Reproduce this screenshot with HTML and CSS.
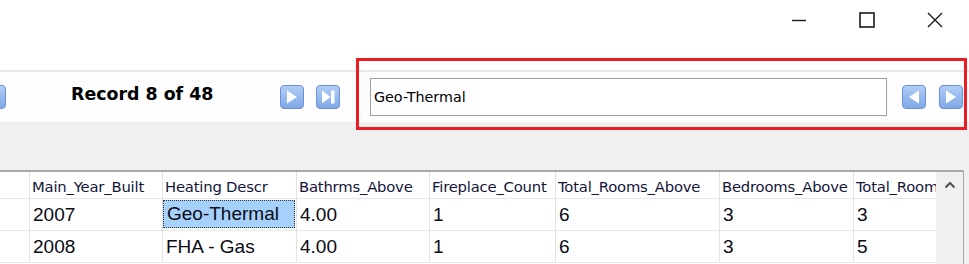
FILE: index.html
```html
<!DOCTYPE html>
<html lang="en">

<head>
    <meta charset="UTF-8">
    <meta name="viewport" content="width=device-width, initial-scale=1.0">
    <title>Record view</title>
    <link rel="stylesheet" href="styles.css">
</head>

<body>
    <div class="titlebar">
        <div class="win">
            <svg width="16" height="16" viewBox="0 0 16 16"><path d="M1 8.5h14" stroke="#1a1a1a" stroke-width="1.4"/></svg>
        </div>
        <div class="win">
            <svg width="16" height="16" viewBox="0 0 16 16"><rect x="1" y="1" width="14" height="14" fill="none" stroke="#1a1a1a" stroke-width="1.6"/></svg>
        </div>
        <div class="win">
            <svg width="16" height="16" viewBox="0 0 16 16"><path d="M1 1L15 15M15 1L1 15" stroke="#1a1a1a" stroke-width="1.4"/></svg>
        </div>
    </div>

    <div class="toolbar">
        <div class="btn cut">
            <svg width="22" height="22" viewBox="0 0 22 22"><path d="M16 4.5v13l-10-6.5z" fill="#fff"/></svg>
        </div>
        <div class="record">Record 8 of 48</div>
        <div class="btn">
            <svg width="22" height="22" viewBox="0 0 22 22"><path d="M6 4.5v13l10-6.5z" fill="#fff"/></svg>
        </div>
        <div class="btn next">
            <svg width="22" height="22" viewBox="0 0 22 22"><path d="M5 4.5v13l8.5-6.5z M14 4.5h3.5v13h-3.5z" fill="#fff"/></svg>
        </div>
        <div class="search">Geo-Thermal</div>
        <div class="btn">
            <svg width="22" height="22" viewBox="0 0 22 22"><path d="M16 4.5v13l-10-6.5z" fill="#fff"/></svg>
        </div>
        <div class="btn pair">
            <svg width="22" height="22" viewBox="0 0 22 22"><path d="M6 4.5v13l10-6.5z" fill="#fff"/></svg>
        </div>
    </div>

    <!-- annotation drawn over the screenshot -->
    <div class="mark"></div>

    <div class="panel">
        <div class="band"></div>
        <div class="grid">
            <div class="cells">
                <div class="row head">
                    <div class="c"></div>
                    <div class="c">Main_Year_Built</div>
                    <div class="c">Heating Descr</div>
                    <div class="c">Bathrms_Above</div>
                    <div class="c">Fireplace_Count</div>
                    <div class="c">Total_Rooms_Above</div>
                    <div class="c">Bedrooms_Above</div>
                    <div class="c">Total_Rooms_Below</div>
                </div>
                <div class="row">
                    <div class="c"></div>
                    <div class="c">2007</div>
                    <div class="c"><div class="sel">Geo-Thermal</div></div>
                    <div class="c">4.00</div>
                    <div class="c">1</div>
                    <div class="c">6</div>
                    <div class="c">3</div>
                    <div class="c">3</div>
                </div>
                <div class="row">
                    <div class="c"></div>
                    <div class="c">2008</div>
                    <div class="c">FHA - Gas</div>
                    <div class="c">4.00</div>
                    <div class="c">1</div>
                    <div class="c">6</div>
                    <div class="c">3</div>
                    <div class="c">5</div>
                </div>
            </div>
            <div class="scroll">
                <svg width="12" height="8" viewBox="0 0 12 8"><path d="M1.5 6.5L6 2l4.5 4.5" fill="none" stroke="#505050" stroke-width="2"/></svg>
            </div>
        </div>
    </div>
</body>

</html>
```

FILE: styles.css
```css
* {
    padding: 0;
    margin: 0;
    box-sizing: border-box;
}

body {
    width: 969px;
    height: 264px;
    overflow: hidden;
    background-color: #ffffff;
    font-family: "DejaVu Sans", sans-serif;
    position: relative;
}

/* 标题栏 */
.titlebar {
    height: 70px;
    display: flex;
    justify-content: flex-end;
    align-items: flex-start;
}

.win {
    width: 68px;
    height: 40px;
    display: flex;
    justify-content: center;
    align-items: center;
}

/* 工具栏 */
.toolbar {
    height: 52px;
    border-top: 2px solid #e8e8e8;
    background-color: #fdfdfd;
    display: flex;
    align-items: center;
}

.btn {
    width: 24px;
    height: 24px;
    border: 1px solid #6c91d6;
    border-radius: 4px;
    background: linear-gradient(#b0cdf6, #7fa9e7);
    display: flex;
    justify-content: center;
    align-items: center;
    flex-shrink: 0;
}

.btn.cut {
    margin-left: -18px;
}

.record {
    margin-left: 65px;
    margin-bottom: 6px;
    width: 209px;
    font-weight: bold;
    font-size: 17.4px;
    color: #000;
}

.btn.next {
    margin-left: 12px;
}

.search {
    margin-left: 30px;
    margin-right: 15px;
    width: 517px;
    height: 38px;
    border: 1px solid #a0a0a0;
    background-color: #fff;
    font-size: 14.3px;
    line-height: 36px;
    padding-left: 3px;
    color: #000;
}

.btn.pair {
    margin-left: 13px;
}

.mark {
    position: absolute;
    left: 356px;
    top: 58px;
    width: 611px;
    height: 72px;
    border: 3px solid #ec1c24;
}

/* 表格区域 */
.panel {
    background-color: #f0f0f0;
    height: 142px;
}

.band {
    height: 48px;
}

.grid {
    width: 964px;
    height: 94px;
    border-top: 2px solid #a8a8a8;
    border-right: 1px solid #a8a8a8;
    display: flex;
    background-color: #fff;
}

.cells {
    width: 936px;
    overflow: hidden;
}

.row {
    display: grid;
    grid-template-columns: 30px 133px 134px 133px 126px 164px 134px 82px;
    height: 32px;
    border-bottom: 1px solid #e6e6e6;
}

.c {
    border-right: 1px solid #e3e3e3;
    padding-left: 3px;
    padding-top: 1px;
    font-family: "Liberation Sans", sans-serif;
    font-size: 19px;
    line-height: 30px;
    color: #0a0a14;
    white-space: nowrap;
    overflow: hidden;
}

.row .c:last-child {
    border-right: none;
}

.row.head {
    height: 27px;
}

.head .c {
    font-family: "DejaVu Sans", sans-serif;
    font-size: 14.8px;
    letter-spacing: -0.2px;
    line-height: 26px;
    padding-left: 2px;
    padding-top: 2px;
    color: #14143a;
}

.c .sel {
    margin: 0 0 0 -3px;
    height: 28px;
    width: 132px;
    padding-left: 4px;
    line-height: 27px;
    background-color: #a6d1fb;
    outline: 1px dotted #333;
    outline-offset: -1px;
}

.scroll {
    width: 27px;
    background-color: #f0f0f0;
    display: flex;
    justify-content: center;
    padding-top: 9px;
}
```
